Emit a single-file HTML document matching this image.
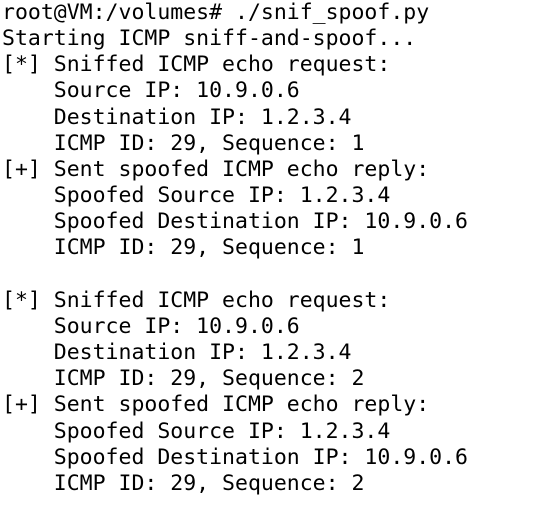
<!DOCTYPE html>
<html><head><meta charset="utf-8"><style>
html,body{margin:0;padding:0;background:#fff;width:551px;height:507px;overflow:hidden}
pre{margin:0;position:absolute;left:2px;top:0px;font-family:"DejaVu Sans Mono","Liberation Mono",monospace;font-size:21.5px;line-height:26.15px;color:#000}
</style></head><body><pre>root@VM:/volumes# ./snif_spoof.py
Starting ICMP sniff-and-spoof...
[*] Sniffed ICMP echo request:
    Source IP: 10.9.0.6
    Destination IP: 1.2.3.4
    ICMP ID: 29, Sequence: 1
[+] Sent spoofed ICMP echo reply:
    Spoofed Source IP: 1.2.3.4
    Spoofed Destination IP: 10.9.0.6
    ICMP ID: 29, Sequence: 1

[*] Sniffed ICMP echo request:
    Source IP: 10.9.0.6
    Destination IP: 1.2.3.4
    ICMP ID: 29, Sequence: 2
[+] Sent spoofed ICMP echo reply:
    Spoofed Source IP: 1.2.3.4
    Spoofed Destination IP: 10.9.0.6
    ICMP ID: 29, Sequence: 2</pre></body></html>
